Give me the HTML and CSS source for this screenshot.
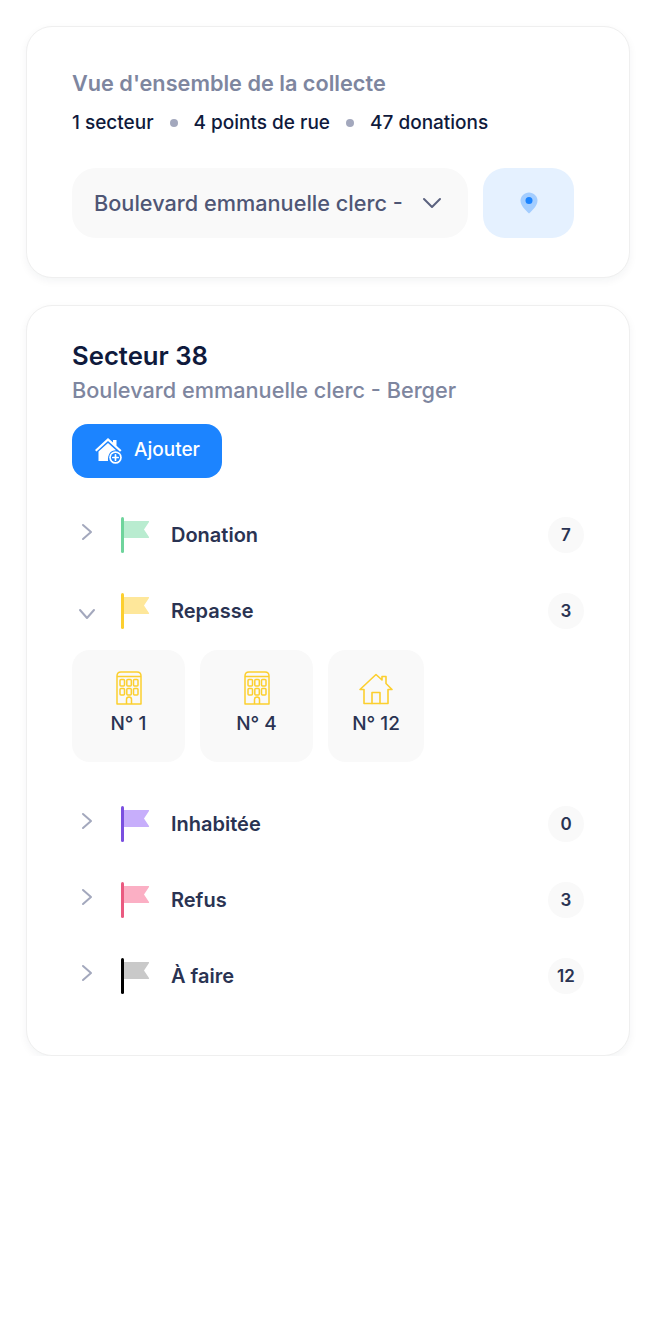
FILE: index.html
```html
<!DOCTYPE html>
<html lang="fr">
<head>
  <meta charset="UTF-8" />
  <meta name="viewport" content="width=device-width, initial-scale=1.0"/>
  <title>Vue d'ensemble de la collecte</title>
  <link rel="stylesheet" href="styles.css">
</head>
<body>
  <svg class="defs" width="0" height="0">
    <symbol id="flag" viewBox="0 0 30 36">
      <path class="flag-cloth" d="M3 4H27.500Q28.500 4 28 5L23 12.500L28 20Q28.500 21 27.500 21H3Z"/>
      <rect class="flag-pole" x="0" y="0" width="3" height="36" rx="1.500"/>
    </symbol>
    <symbol id="chevron-right" viewBox="0 0 12 18">
      <path d="M2 2L10 9L2 16" fill="none" stroke="#a3a8bd" stroke-width="2" stroke-linecap="round" stroke-linejoin="round"/>
    </symbol>
    <symbol id="building" viewBox="0 0 26 34">
      <g fill="none" stroke="#fccf2f" stroke-width="1.500" stroke-linejoin="round">
        <path d="M1 33V5Q1 1 5 1H21Q25 1 25 5V33Z"/>
        <path d="M1 5.500H25"/>
        <rect x="4" y="8.500" width="4.500" height="6.500" rx="1"/>
        <rect x="10.800" y="8.500" width="4.500" height="6.500" rx="1"/>
        <rect x="17.500" y="8.500" width="4.500" height="6.500" rx="1"/>
        <rect x="4" y="17.500" width="4.500" height="6.500" rx="1"/>
        <rect x="10.800" y="17.500" width="4.500" height="6.500" rx="1"/>
        <rect x="17.500" y="17.500" width="4.500" height="6.500" rx="1"/>
        <path d="M10.500 33V28.500Q10.500 26 13 26Q15.500 26 15.500 28.500V33"/>
      </g>
    </symbol>
    <symbol id="house" viewBox="0 0 34 32">
      <g fill="none" stroke="#fccf2f" stroke-width="1.600" stroke-linejoin="round" stroke-linecap="round">
        <path d="M1 16.500L17 1.500L23 7V3.500H27V10.500L33 16.500H29V30.500H5V16.500Z"/>
        <path d="M13 30.500V19.500H21V30.500"/>
      </g>
    </symbol>
  </svg>

  <main class="page">
    <section class="card overview">
      <h2 class="overview-title">Vue d'ensemble de la collecte</h2>
      <div class="stats">
        <span>1 secteur</span>
        <i class="dot"></i>
        <span>4 points de rue</span>
        <i class="dot"></i>
        <span>47 donations</span>
      </div>
      <div class="filters">
        <div class="select">
          <span class="select-text">Boulevard emmanuelle clerc - Berger</span>
          <svg class="select-arrow" width="20" height="12" viewBox="0 0 20 12">
            <path d="M2 2L10 10L18 2" fill="none" stroke="#5b627f" stroke-width="2" stroke-linecap="round" stroke-linejoin="round"/>
          </svg>
        </div>
        <button class="locate" aria-label="Localiser">
          <svg width="18" height="22" viewBox="0 0 18 22">
            <path d="M9 0.500C13.700 0.500 17.500 4.200 17.500 8.800C17.500 13.500 12.500 18.500 9 21.500C5.500 18.500 0.500 13.500 0.500 8.800C0.500 4.200 4.300 0.500 9 0.500Z" fill="#a3cdff"/>
            <circle cx="9" cy="8.500" r="3.500" fill="#1c84ff"/>
          </svg>
        </button>
      </div>
    </section>

    <section class="card sector">
      <h1 class="sector-title">Secteur 38</h1>
      <p class="sector-street">Boulevard emmanuelle clerc - Berger</p>
      <button class="add">
        <svg width="30" height="28" viewBox="0 0 30 28">
          <path d="M14 1L19 5.500V3H22.500V8.700L27.500 13.300L26 14.800L14 4L2.500 14.500L1 13Z" fill="#fff"/>
          <path d="M4.500 14.500L14 6L22 13.200C17 13 13.500 17 14 24H4.500Z" fill="#fff"/>
          <circle cx="21.500" cy="20.500" r="6.300" fill="#fff"/>
          <circle cx="21.500" cy="20.500" r="4.600" fill="#1c84ff"/>
          <path d="M21.500 17.800V23.200M18.800 20.500H24.200" stroke="#fff" stroke-width="1.700" stroke-linecap="round"/>
        </svg>
        <span class="add-label">Ajouter</span>
      </button>

      <ul class="statuses">
        <li class="status green">
          <svg class="toggle" width="12" height="18"><use href="#chevron-right"/></svg>
          <svg class="flag" width="30" height="36"><use href="#flag"/></svg>
          <span class="status-name">Donation</span>
          <span class="count">7</span>
        </li>
        <li class="status yellow">
          <svg class="toggle toggle-open" width="18" height="12" viewBox="0 0 18 12">
            <path d="M2 2L9 10L16 2" fill="none" stroke="#a3a8bd" stroke-width="2" stroke-linecap="round" stroke-linejoin="round"/>
          </svg>
          <svg class="flag" width="30" height="36"><use href="#flag"/></svg>
          <span class="status-name">Repasse</span>
          <span class="count">3</span>
        </li>
        <li class="addresses">
          <div class="address wide">
            <svg width="26" height="34"><use href="#building"/></svg>
            <span>N° 1</span>
          </div>
          <div class="address wide">
            <svg width="26" height="34"><use href="#building"/></svg>
            <span>N° 4</span>
          </div>
          <div class="address">
            <svg class="house" width="34" height="32"><use href="#house"/></svg>
            <span>N° 12</span>
          </div>
        </li>
        <li class="status purple">
          <svg class="toggle" width="12" height="18"><use href="#chevron-right"/></svg>
          <svg class="flag" width="30" height="36"><use href="#flag"/></svg>
          <span class="status-name">Inhabitée</span>
          <span class="count">0</span>
        </li>
        <li class="status pink">
          <svg class="toggle" width="12" height="18"><use href="#chevron-right"/></svg>
          <svg class="flag" width="30" height="36"><use href="#flag"/></svg>
          <span class="status-name">Refus</span>
          <span class="count">3</span>
        </li>
        <li class="status grey">
          <svg class="toggle" width="12" height="18"><use href="#chevron-right"/></svg>
          <svg class="flag" width="30" height="36"><use href="#flag"/></svg>
          <span class="status-name">À faire</span>
          <span class="count">12</span>
        </li>
      </ul>
    </section>
  </main>
</body>
</html>
```

FILE: styles.css
```css
* {
  box-sizing: border-box;
}
body {
  margin: 0;
  background-color: #fff;
  color: #0f1a3c;
  font-family: Inter, "Liberation Sans", sans-serif;
}
.defs {
  position: absolute;
}
.page {
  display: flex;
  flex-direction: column;
  gap: 27px;
  padding: 26px 26px 0;
}
.card {
  background-color: #fff;
  border: 1px solid #efefef;
  border-radius: 26px;
  box-shadow: 0 3px 8px rgba(20, 30, 60, 0.05);
  padding: 0 45px;
}

/* overview */
.overview {
  height: 252px;
  padding-top: 42px;
}
.overview-title {
  margin: 0;
  color: #7e869f;
  font-size: 21.700px;
  font-weight: 600;
  line-height: 28px;
}
.stats {
  display: flex;
  align-items: center;
  gap: 16px;
  margin-top: 13px;
  font-size: 19px;
  font-weight: 500;
  line-height: 26px;
}
.dot {
  width: 8px;
  height: 8px;
  border-radius: 50%;
  background-color: #a3a8bd;
}
.filters {
  display: flex;
  gap: 15px;
  margin-top: 32px;
}
.select {
  display: flex;
  align-items: center;
  width: 396px;
  height: 70px;
  padding: 0 26px 0 22px;
  border-radius: 24px;
  background-color: #f9f9f9;
}
.select-text {
  flex: 1;
  overflow: hidden;
  color: #4f5675;
  font-size: 21.700px;
  font-weight: 500;
  white-space: nowrap;
}
.select-arrow {
  flex: none;
  margin-left: 16px;
}
.locate {
  display: flex;
  align-items: center;
  justify-content: center;
  width: 91px;
  height: 70px;
  border: 0;
  border-radius: 22px;
  background-color: #e5f1ff;
}

/* sector */
.sector {
  height: 751px;
  padding-top: 34px;
}
.sector-title {
  margin: 0;
  font-size: 25.700px;
  font-weight: 600;
  line-height: 32px;
}
.sector-street {
  margin: 3px 0 0;
  color: #7e869f;
  font-size: 21.700px;
  font-weight: 500;
  line-height: 30px;
}
.add {
  display: flex;
  align-items: center;
  gap: 10px;
  width: 150px;
  height: 54px;
  margin-top: 19px;
  padding: 0 0 0 22px;
  border: 0;
  border-radius: 16px;
  background-color: #1c84ff;
  color: #fff;
  font-family: inherit;
  font-size: 19px;
  font-weight: 500;
}
.add-label {
  margin-bottom: 3px;
}
.statuses {
  margin: 19px 0 0;
  padding: 0;
  list-style: none;
}
.status {
  display: flex;
  align-items: center;
  height: 76px;
}
.toggle {
  flex: none;
  margin: -6px 28px 0 9px;
}
.toggle-open {
  margin: 6px 25px 0 6px;
}
.flag {
  flex: none;
}
.status-name {
  flex: 1;
  margin-left: 20px;
  color: #2a3352;
  font-size: 20px;
  font-weight: 600;
}
.count {
  display: flex;
  align-items: center;
  justify-content: center;
  width: 36px;
  height: 36px;
  border-radius: 50%;
  background-color: #f9f9f9;
  color: #2a3352;
  font-size: 17px;
  font-weight: 600;
}
.green {
  --pole: #6fd49c;
  --cloth: #b9ecd0;
}
.yellow {
  --pole: #fccf2f;
  --cloth: #fee79a;
}
.purple {
  --pole: #7a4fe0;
  --cloth: #c7aefb;
}
.pink {
  --pole: #ea5a80;
  --cloth: #fbafc4;
}
.grey {
  --pole: #000;
  --cloth: #c9c9c9;
}
.flag-pole {
  fill: var(--pole);
}
.flag-cloth {
  fill: var(--cloth);
}

/* addresses under an open status */
.addresses {
  display: flex;
  gap: 15px;
  margin: 1px 0 24px;
}
.address {
  display: flex;
  flex-direction: column;
  align-items: center;
  width: 96px;
  height: 112px;
  padding-top: 21px;
  border-radius: 18px;
  background-color: #f9f9f9;
  color: #2a3352;
  font-size: 19px;
  font-weight: 500;
}
.address.wide {
  width: 113px;
}
.address span {
  margin-top: 7px;
}
.house {
  margin-top: 2px;
}
```
